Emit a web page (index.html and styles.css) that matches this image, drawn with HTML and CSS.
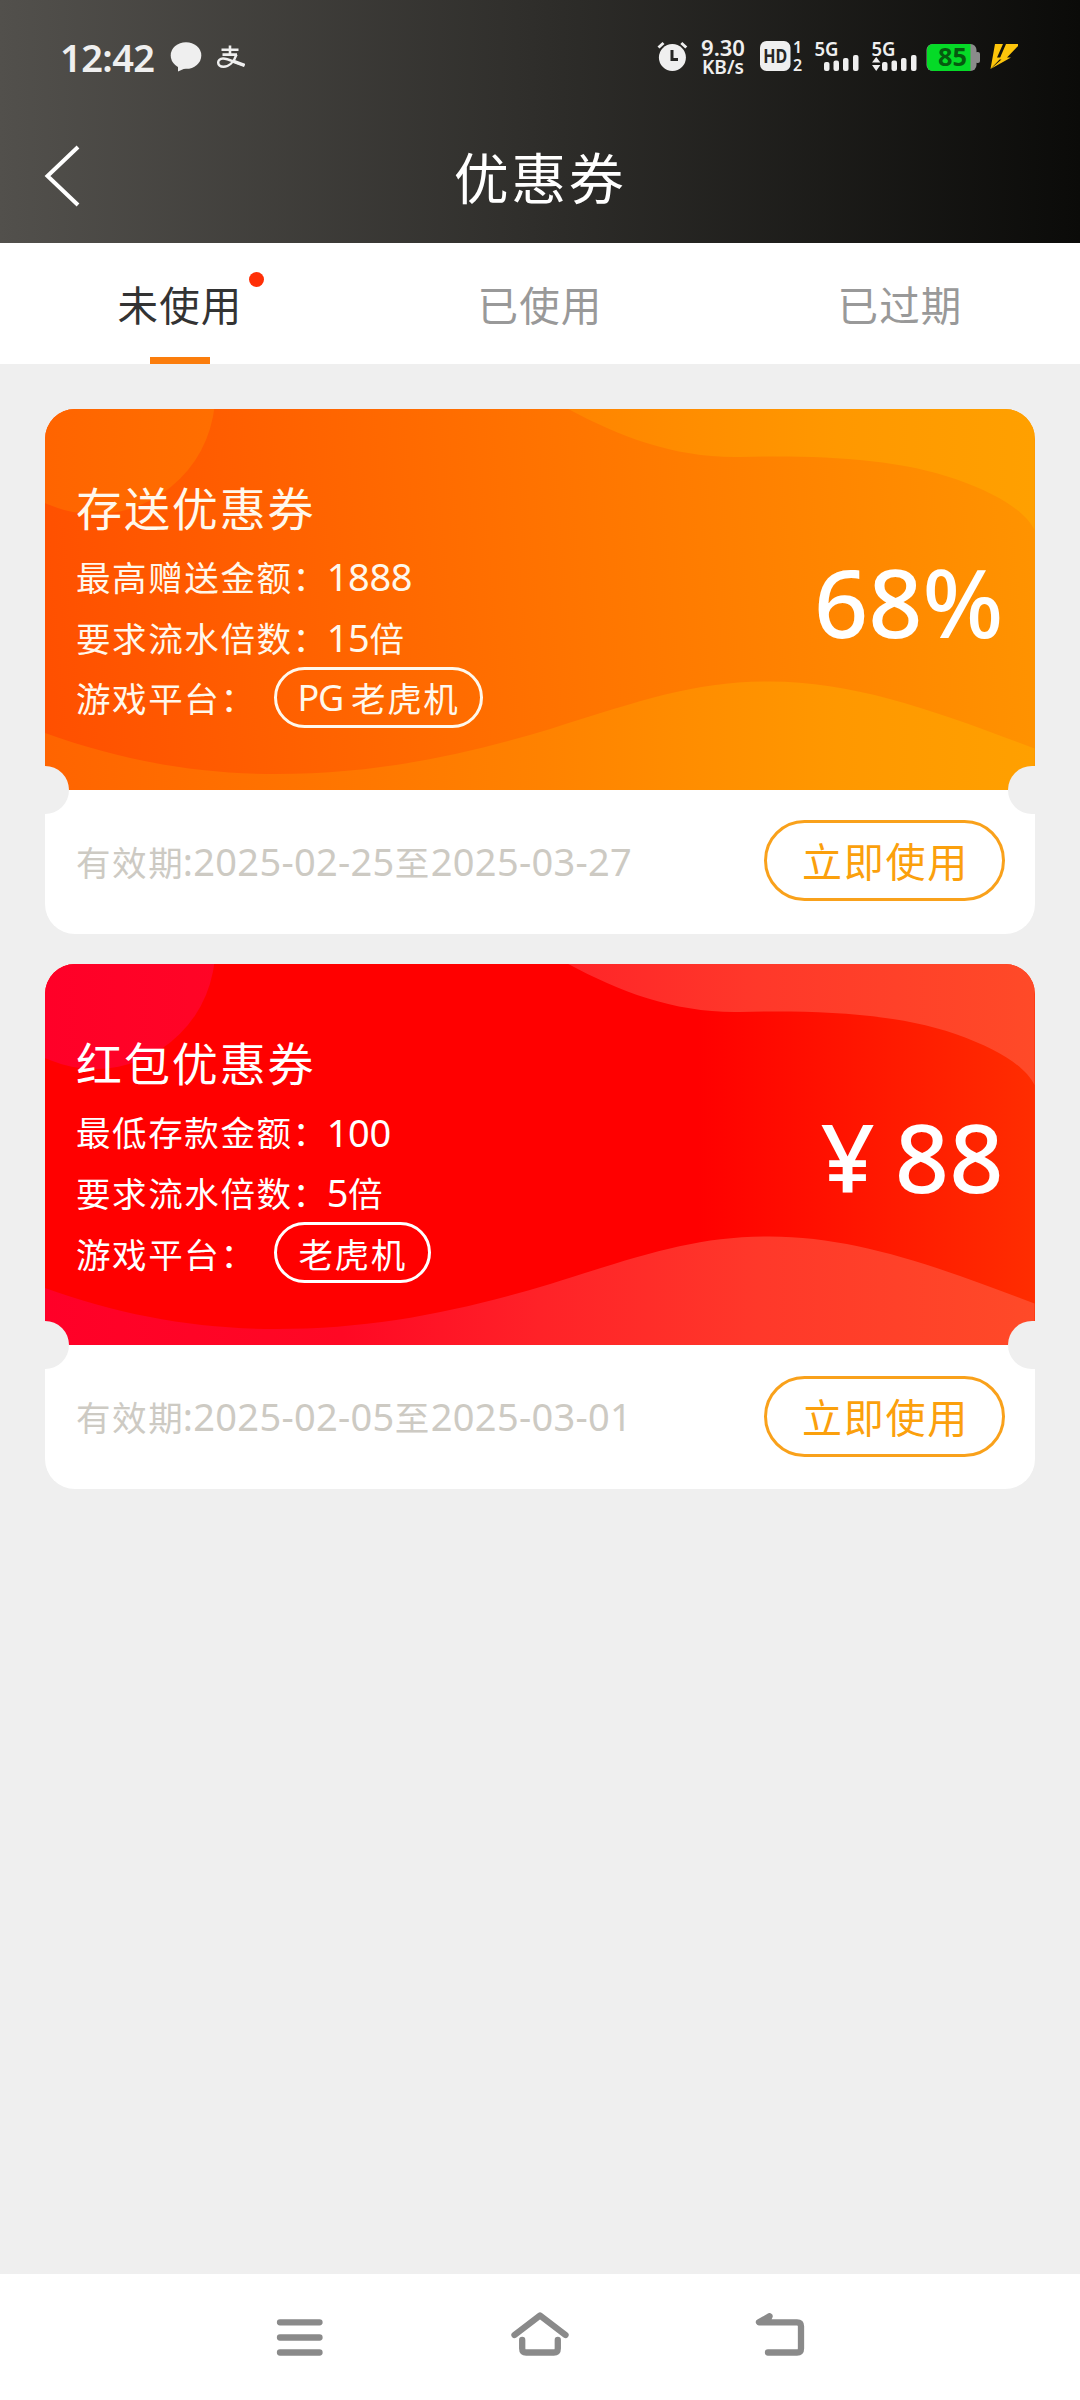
FILE: index.html
```html
<!DOCTYPE html>
<html lang="zh-CN">
<head>
<meta charset="utf-8">
<title>优惠券</title>
<link rel="stylesheet" href="styles.css">
</head>
<body>
<header class="header">
  <div class="status">
    <div class="status-left">
      <span class="clock">12:42</span>
      <svg class="bubble" width="32" height="30" viewBox="0 0 32 30"><ellipse cx="16" cy="13.5" rx="15.3" ry="13.3"/><path d="M8 22v7.500l9-4z"/></svg>
      <svg class="pay" width="28" height="24" viewBox="0 0 28 24"><path d="M4.500 4.800h17M5.500 9.600h14.500M13 .5v9" stroke-width="2.600"/><path d="M19.500 9.500C17 17 12 21.800 6.500 21.800C-.5 21.800-.5 13.500 6 13.500C12 13.500 18 18 27.500 20.300" stroke-width="2.400"/><path d="M16 16.200l11.500 4.300" stroke-width="3.400"/></svg>
    </div>
    <div class="status-right">
      <svg width="362" height="40" viewBox="656 38 362 40">
        <g fill="#efefef">
          <circle cx="672.400" cy="58.500" r="13.500"/>
          <path d="M658.500 48.500l5-4.500M686.300 48.500l-5-4.500" stroke="#efefef" stroke-width="3"/>
          <path d="M672 51v9.500h6" fill="none" stroke="#262624" stroke-width="3"/>
          <text x="723" y="57" class="speed" text-anchor="middle" textLength="44" lengthAdjust="spacingAndGlyphs">9.30</text>
          <text x="723" y="74.500" class="unit" text-anchor="middle" textLength="42" lengthAdjust="spacingAndGlyphs">KB/s</text>
          <rect x="760" y="42" width="30.500" height="30" rx="6.500"/>
          <text x="775.200" y="64" class="hd" text-anchor="middle" textLength="24" lengthAdjust="spacingAndGlyphs">HD</text>
          <text x="797.500" y="54" class="sim" text-anchor="middle">1</text>
          <text x="797.500" y="71.500" class="sim" text-anchor="middle">2</text>
          <text x="826.500" y="57" class="net" text-anchor="middle" textLength="24" lengthAdjust="spacingAndGlyphs">5G</text>
          <rect x="824" y="63" width="5.500" height="9" rx="2"/><rect x="833.500" y="61.500" width="5.500" height="10.500" rx="2"/><rect x="843" y="59" width="5.500" height="13" rx="2"/><rect x="853" y="56" width="5.500" height="16" rx="2"/>
          <text x="883.500" y="57" class="net" text-anchor="middle" textLength="24" lengthAdjust="spacingAndGlyphs">5G</text>
          <path d="M872 63.500l4.200-5.500 4.200 5.500zM872 66l4.200 6 4.200-6z"/>
          <rect x="882" y="63" width="5.500" height="9" rx="2"/><rect x="891.500" y="61.500" width="5.500" height="10.500" rx="2"/><rect x="901" y="59" width="5.500" height="13" rx="2"/><rect x="911" y="56" width="5.500" height="16" rx="2"/>
        </g>
        <rect x="926.500" y="45" width="50" height="27" rx="6" fill="#8b8b8b"/>
        <rect x="975" y="53" width="5" height="11" rx="2" fill="#8b8b8b"/>
        <path d="M933 45h37.500v27H933a6 6 0 0 1-6-6V51a6 6 0 0 1 6-6z" fill="#05da27"/>
        <text x="952.500" y="67" class="charge" text-anchor="middle" textLength="29" lengthAdjust="spacingAndGlyphs">85</text>
        <path d="M995 45h8l-6 13.500h4.500L990.500 70z" fill="#fdc50b"/>
        <path d="M1006 45h14l-13 13.500h4L990.500 70l11-9.500h-2l1.500-4z" fill="#fdc50b"/>
      </svg>
    </div>
  </div>
  <div class="titlebar">
    <svg class="back" width="36" height="62" viewBox="0 0 36 62"><path d="M34 2L3.500 31 34 60"/></svg>
    <h1 class="title">优惠券</h1>
  </div>
</header>
<nav class="tabs">
  <div class="tab tab-active"><span class="tab-label">未使用<i class="dot"></i></span></div>
  <div class="tab"><span class="tab-label">已使用</span></div>
  <div class="tab"><span class="tab-label">已过期</span></div>
</nav>
<main class="list">
  <article class="coupon">
    <div class="face face-orange">
      <svg class="waves" viewBox="0 0 989 381.500" preserveAspectRatio="none">
        <defs><linearGradient id="wave-orange" gradientUnits="userSpaceOnUse" x1="0" y1="0" x2="989" y2="0"><stop offset="0" stop-color="#ff6400"/><stop offset=".5" stop-color="#ff8200"/><stop offset=".8" stop-color="#ff9800"/><stop offset="1" stop-color="#ffa000"/></linearGradient></defs>
        <g fill="url(#wave-orange)">
          <circle cx="50" cy="-15" r="120"/>
          <path d="M523 0C575 28 630 49 694 48C770 46 850 49 910 70C955 86 980 103 989 121V0z"/>
          <path d="M0 324C75 351 150 365 231 365C330 365 415 347 505 320C600 290 650 272.500 724 272.500C810 272.500 890 302 989 339.500V382H0z"/>
        </g>
      </svg>
      <div class="info">
        <h2 class="name">存送优惠券</h2>
        <p class="row">最高赠送金额：<span class="num">1888</span></p>
        <p class="row">要求流水倍数：<span class="num">15</span>倍</p>
        <p class="row">游戏平台：<span class="pill"><span class="latin">PG</span>老虎机</span></p>
      </div>
      <div class="amount">68%</div>
    </div>
    <div class="foot"><span class="date">有效期<span class="num">:2025-02-25</span>至<span class="num">2025-03-27</span></span><a class="use">立即使用</a></div>
    <i class="notch notch-left"></i><i class="notch notch-right"></i>
  </article>
  <article class="coupon">
    <div class="face face-red">
      <svg class="waves" viewBox="0 0 989 381.500" preserveAspectRatio="none">
        <defs><linearGradient id="wave-red" gradientUnits="userSpaceOnUse" x1="0" y1="0" x2="989" y2="0"><stop offset="0" stop-color="#ff0028"/><stop offset=".3" stop-color="#ff0824"/><stop offset=".5" stop-color="#ff2228"/><stop offset=".72" stop-color="#ff382a"/><stop offset="1" stop-color="#ff4a28"/></linearGradient></defs>
        <g fill="url(#wave-red)">
          <circle cx="50" cy="-15" r="120"/>
          <path d="M523 0C575 28 630 49 694 48C770 46 850 49 910 70C955 86 980 103 989 121V0z"/>
          <path d="M0 324C75 351 150 365 231 365C330 365 415 347 505 320C600 290 650 272.500 724 272.500C810 272.500 890 302 989 339.500V382H0z"/>
        </g>
      </svg>
      <div class="info">
        <h2 class="name">红包优惠券</h2>
        <p class="row">最低存款金额：<span class="num">100</span></p>
        <p class="row">要求流水倍数：<span class="num">5</span>倍</p>
        <p class="row">游戏平台：<span class="pill">老虎机</span></p>
      </div>
      <div class="amount"><span class="yen">¥</span>88</div>
    </div>
    <div class="foot"><span class="date">有效期<span class="num">:2025-02-05</span>至<span class="num">2025-03-01</span></span><a class="use">立即使用</a></div>
    <i class="notch notch-left"></i><i class="notch notch-right"></i>
  </article>
</main>
<footer class="navbar">
  <svg width="60" height="60" viewBox="270 2307 60 60"><path d="M280 2322.300h39.500M280 2337.500h39.500M280 2352.500h39.500"/></svg>
  <svg width="60" height="60" viewBox="510 2307 60 60"><path d="M514.500 2335L540 2315.500 565.500 2335M522.200 2340v8.500q0 4 4 4h27.600q4 0 4-4v-8.500"/></svg>
  <svg width="60" height="60" viewBox="750 2307 60 60"><path d="M769.500 2316.300L759 2322.300H797q4 0 4 4v22.200q0 4-4 4H768M769.500 2316.300l-2.500 5"/></svg>
</footer>
</body>
</html>
```
FILE: styles.css
```css
* { box-sizing: border-box; }
body {
  margin: 0;
  width: 1080px;
  height: 2400px;
  display: flex;
  flex-direction: column;
  background: #efefef;
  font-family: "Noto Sans CJK SC", "Noto Sans", sans-serif;
}
h1, h2, p { margin: 0; font-weight: 400; }
svg { display: block; flex: none; }

.header {
  height: 243px;
  background: linear-gradient(90deg, #52504c, #0b0b09);
  color: #fff;
}
.status {
  height: 114px;
  display: flex;
  justify-content: space-between;
  padding: 0 62px 0 60px;
}
.status-left { display: flex; align-items: center; }
.clock {
  font: 600 38px/114px "Noto Sans", sans-serif;
  color: #efefef;
  letter-spacing: -0.6px;
  width: 110px;
}
.bubble { fill: #efefef; }
.pay { margin-left: 15px; fill: none; stroke: #efefef; }
.status-right { display: flex; align-items: center; }
.status-right text { font-family: "Noto Sans", sans-serif; font-weight: 600; }
.status-right .speed { font-size: 22px; }
.status-right .unit { font-size: 19px; }
.status-right .hd { font-size: 19px; font-weight: 700; fill: #262624; }
.status-right .sim { font-size: 16px; }
.status-right .net { font-size: 20px; }
.status-right .charge { font-size: 25px; font-weight: 700; fill: #06590f; }

.titlebar {
  height: 123px;
  display: grid;
  grid-template-columns: 80px 1fr 80px;
  align-items: center;
}
.back { margin-left: 44px; fill: none; stroke: #fff; stroke-width: 4; }
.title {
  font-size: 55px;
  line-height: 100px;
  letter-spacing: 2.5px;
  text-align: center;
  padding-bottom: 2px;
}

.tabs { height: 121px; display: flex; background: #fff; }
.tab {
  flex: 1;
  display: flex;
  flex-direction: column;
  align-items: center;
  color: #999;
  font-size: 40.500px;
  line-height: 121px;
}
.tab-label { position: relative; letter-spacing: 1.2px; }
.tab-active { color: #333; }
.tab-active::after {
  content: "";
  width: 60px;
  height: 7px;
  margin-top: -7px;
  background: #fb7d0c;
}
.dot {
  position: absolute;
  right: -21px;
  top: 29px;
  width: 15px;
  height: 15px;
  border-radius: 50%;
  background: #ff2f06;
}

.list {
  flex: 1;
  display: flex;
  flex-direction: column;
  gap: 30px;
  padding: 44.500px 45.500px 44.500px 45px;
}
.coupon {
  position: relative;
  height: 525.300px;
  border-radius: 30px;
  background: #fff;
}
.face {
  position: relative;
  height: 381.500px;
  display: flex;
  justify-content: space-between;
  padding: 58px 31px 0 31px;
  border-radius: 30px 30px 0 0;
  overflow: hidden;
  color: #fff8ec;
}
.face-orange { background: linear-gradient(85deg, #ff4f00, #ff7200 50%, #ff9400); }
.face-red { background: linear-gradient(90deg, #f00 66%, #ff2d00); color: #fff; }
.waves { position: absolute; inset: 0; width: 100%; height: 100%; }
.info, .amount { position: relative; }
.name { font-size: 46px; line-height: 79px; letter-spacing: 1.9px; }
.row {
  display: flex;
  align-items: center;
  height: 60.700px;
  font-size: 34.500px;
  line-height: 60px;
  letter-spacing: 1.6px;
  white-space: nowrap;
}
.num {
  font-family: "Noto Sans", sans-serif;
  font-size: 38px;
  letter-spacing: 0.3px;
}
.row .num { margin-left: -2px; letter-spacing: -0.4px; padding-top: 1px; }
.pill {
  display: flex;
  align-items: center;
  height: 61px;
  margin-left: 17px;
  padding: 0 21px 0 22px;
  border: 3px solid currentColor;
  border-radius: 31px;
}
.latin { font-family: "Noto Sans", sans-serif; font-size: 36px; letter-spacing: -1.2px; margin: 2px 8px 0 -1px; }
.amount {
  font: 500 95px/268px "Noto Sans", sans-serif;
  color: #fff;
}
.yen { margin-right: 20px; }
.foot {
  height: 143.800px;
  display: flex;
  align-items: center;
  justify-content: space-between;
  padding: 0 29.500px 2px 31px;
}
.date { color: #cdcac3; font-size: 34.500px; letter-spacing: 1.6px; white-space: nowrap; }
.date .num:first-child { margin-left: -1.500px; }
.use {
  width: 241px;
  height: 81px;
  border: 3px solid #f9a11b;
  border-radius: 41px;
  color: #fba00c;
  font-size: 40px;
  line-height: 75px;
  letter-spacing: 1.700px;
  padding-left: 2px;
  text-align: center;
}
.notch {
  position: absolute;
  top: 357.500px;
  height: 48px;
  background: #efefef;
}
.notch-left { left: -1px; width: 25px; border-radius: 0 24px 24px 0; }
.notch-right { right: -1px; width: 28px; border-radius: 24px 0 0 24px; }

.navbar {
  height: 126px;
  display: flex;
  justify-content: center;
  gap: 180px;
  padding-top: 33px;
  background: #fff;
}
.navbar path {
  fill: none;
  stroke: #8a8a8a;
  stroke-width: 6.300;
  stroke-linecap: round;
  stroke-linejoin: round;
}
```
